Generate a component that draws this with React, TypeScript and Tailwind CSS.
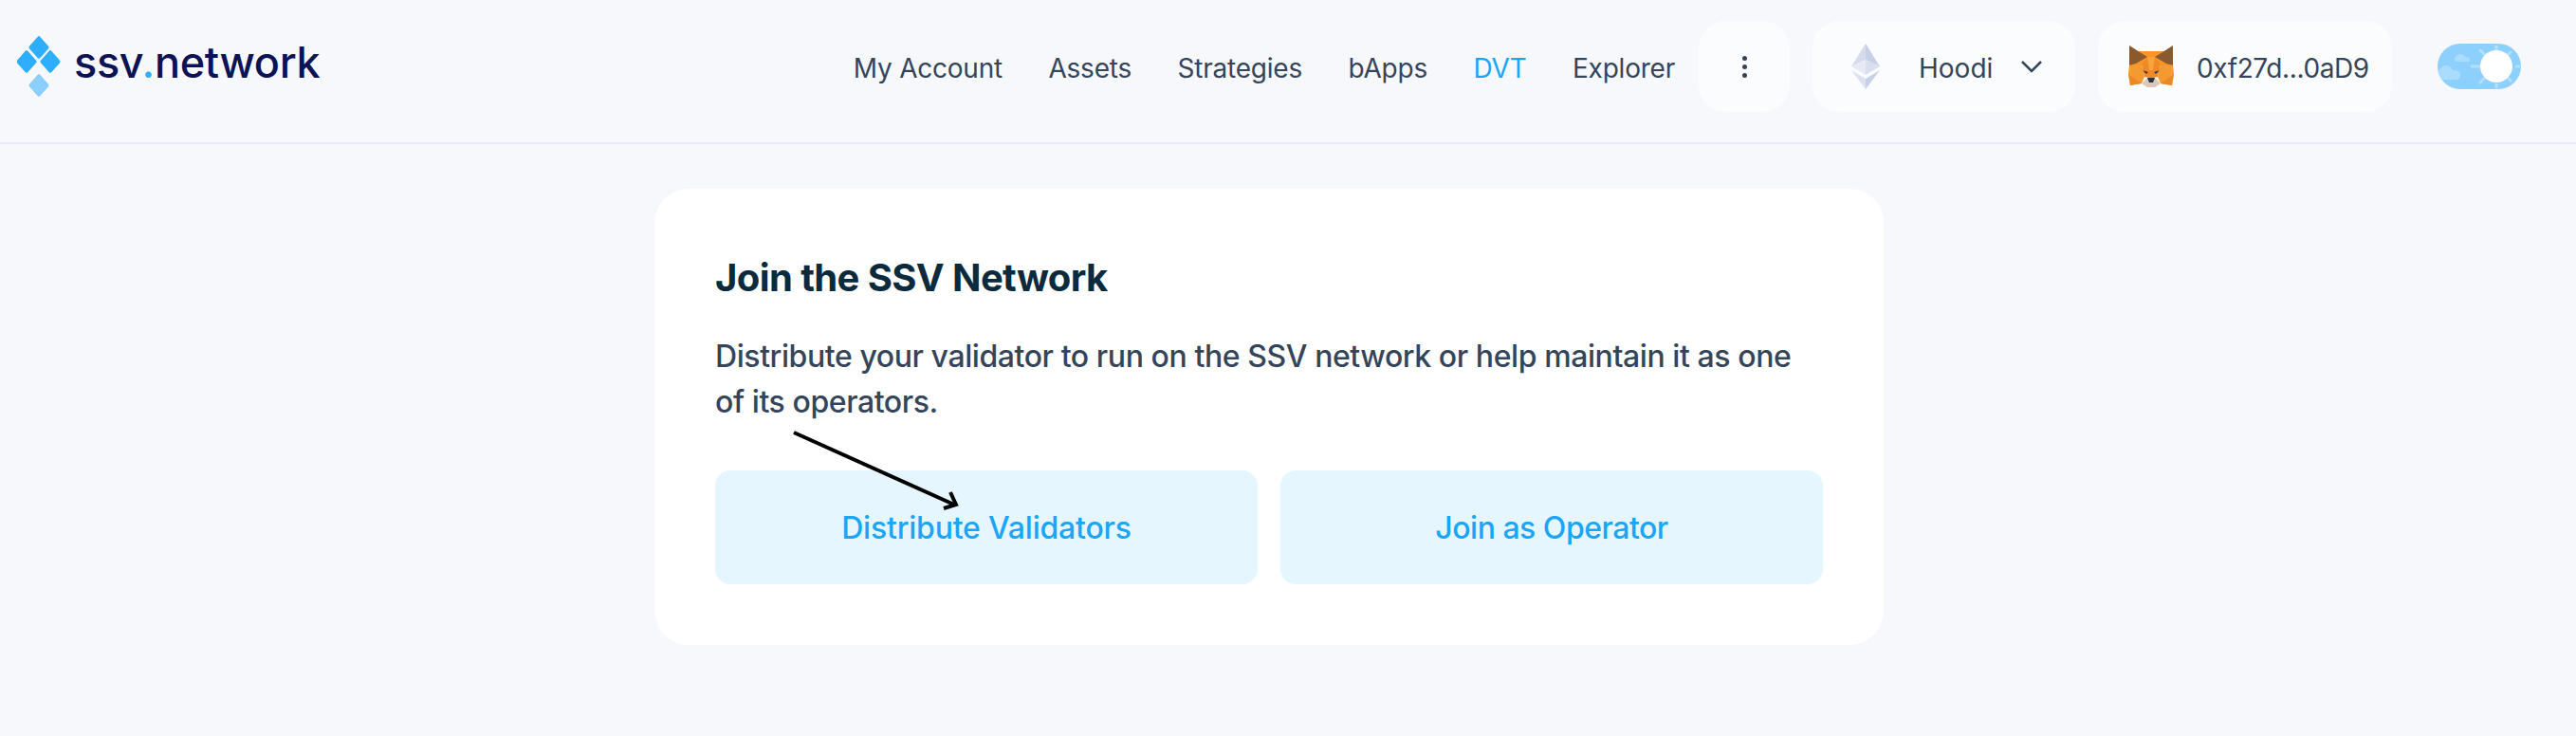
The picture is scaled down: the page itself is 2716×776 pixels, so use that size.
import React from "react";

const navItems = ["My Account", "Assets", "Strategies", "bApps", "DVT", "Explorer"];

const Logo = () => (
  <div className="flex items-center">
    <svg width="50" height="66" viewBox="0 0 50 66" className="shrink-0">
      <g fill="#2eaeff">
        <rect x="-8" y="-8" width="16" height="16" rx="2" transform="translate(23 13) scale(1 1.12) rotate(45)" />
        <rect x="-8" y="-8" width="16" height="16" rx="2" transform="translate(10 28) scale(1 1.12) rotate(45)" />
        <rect x="-8" y="-8" width="16" height="16" rx="2" transform="translate(35 28) scale(1 1.12) rotate(45)" />
      </g>
      <rect x="-8" y="-8" width="16" height="16" rx="2" fill="#8bcfff" transform="translate(23 53) scale(1 1.12) rotate(45)" />
    </svg>
    <span className="mb-[10px] ml-[10px] text-[45px] leading-none font-medium text-[#0b1354] tracking-[-0.3px] font-['Inter',sans-serif]">
      ssv<span className="text-[#2eaeff]">.</span>network
    </span>
  </div>
);

const EthIcon = () => (
  <svg width="30" height="48" viewBox="0 0 30 48">
    <polygon points="15,0 0,24 15,17" fill="#d5dcec" />
    <polygon points="15,0 30,24 15,17" fill="#c7d0e6" />
    <polygon points="15,17 0,24 15,33" fill="#e6eaf4" />
    <polygon points="15,17 30,24 15,33" fill="#d9dfee" />
    <polygon points="0,28 15,48 15,37" fill="#dde2f0" />
    <polygon points="30,28 15,48 15,37" fill="#c7d0e6" />
  </svg>
);

const FoxIcon = () => (
  <svg width="48" height="44" viewBox="0 0 48 44">
    <polygon points="9,6 39,6 47,22 34,21 14,21 1,22" fill="#f7952c" />
    <polygon points="1,0 20,12 8,19 1,21" fill="#8a5a2e" />
    <polygon points="47,0 28,12 40,19 47,21" fill="#8a5a2e" />
    <polygon points="1,21 14,20 17,33 14,40 2,42 0,30" fill="#f59a30" />
    <polygon points="47,21 34,20 31,33 34,40 46,42 48,30" fill="#f59a30" />
    <polygon points="14,20 20,12 28,12 34,20 31,33 26,34 22,34 17,33" fill="#ef8a26" />
    <polygon points="20,12 28,12 26,26 22,26" fill="#f9a33d" />
    <polygon points="0,30 14,40 2,42" fill="#e98a29" />
    <polygon points="48,30 34,40 46,42" fill="#e98a29" />
    <polygon points="14,40 20,34 28,34 34,40 28,44 20,44" fill="#d9c7ba" />
    <polygon points="20,34 28,34 26,39 22,39" fill="#333" />
    <polygon points="15,26 21,28 19,30" fill="#3a3a3a" />
    <polygon points="33,26 27,28 29,30" fill="#3a3a3a" />
  </svg>
);

const ThemeToggle = () => (
  <div className="relative h-12 w-[88px] rounded-full bg-[#8ed0fd] overflow-hidden">
    <svg width="88" height="48" viewBox="0 0 88 48" className="absolute inset-0">
      <g fill="#a9dcfd">
        <path d="M18 17c0-4 3-6 6-6 2 0 4 1 5 3 3 0 5 1 5 3s-1 2-3 2H20c-1 0-2-1-2-2z" />
        <path d="M1 32c0-5 4-9 8-9 3 0 5 2 7 5 4 0 8 1 8 5s-2 5-4 5H6c-2-1-5-3-5-6z" />
      </g>
      <g stroke="#b5e0fd" strokeWidth="3" strokeLinecap="round">
        <line x1="62" y1="3" x2="62" y2="6" />
        <line x1="62" y1="43" x2="62" y2="46" />
        <line x1="36" y1="24" x2="44" y2="24" />
        <line x1="83" y1="24" x2="86" y2="24" />
        <line x1="45" y1="7" x2="50" y2="12" />
        <line x1="45" y1="41" x2="50" y2="36" />
        <line x1="77" y1="9" x2="74" y2="12" />
        <line x1="77" y1="39" x2="74" y2="36" />
      </g>
    </svg>
    <div className="absolute left-[45px] top-[7px] h-[34px] w-[34px] rounded-full bg-white" />
  </div>
);

export default function App() {
  return (
    <div className="min-h-screen bg-[#f7f8fc] font-['Inter',sans-serif]">
      <header className="flex h-[152px] items-center justify-between border-b-2 border-[#e6ebf9] pl-[18px] pr-[58px] pb-[10px]">
        <Logo />
        <div className="flex items-center">
          <nav className="flex items-center gap-[48.5px] pt-[3px] text-[28px] font-normal tracking-[-0.22px] text-[#34455a]">
            {navItems.map((item) => (
              <span key={item} className={item === "DVT" ? "text-[#1ba5f8]" : ""}>
                {item}
              </span>
            ))}
          </nav>
          <button className="ml-[25px] flex h-24 w-24 items-center justify-center rounded-[28px] bg-[#fbfcfe]">
            <span className="flex flex-col gap-[4px]">
              <span className="h-[5px] w-[5px] rounded-full bg-[#34455a]" />
              <span className="h-[5px] w-[5px] rounded-full bg-[#34455a]" />
              <span className="h-[5px] w-[5px] rounded-full bg-[#34455a]" />
            </span>
          </button>
          <button className="ml-6 flex h-24 w-[277px] items-center rounded-[28px] bg-[#fbfcfe] pl-[41px] text-[28px] font-normal text-[#34455a]">
            <EthIcon />
            <span className="ml-[41px] pt-[3px]">Hoodi</span>
            <svg width="22" height="14" viewBox="0 0 22 14" fill="none" stroke="#34455a" strokeWidth="2.5" className="ml-[30px]">
              <path d="M1 2l10 10L21 2" />
            </svg>
          </button>
          <button className="ml-6 flex h-24 w-[310px] items-center rounded-[28px] bg-[#fbfcfe] pl-8 text-[28px] font-normal tracking-[-0.4px] text-[#34455a]">
            <FoxIcon />
            <span className="ml-[24px] pt-[3px]">0xf27d...0aD9</span>
          </button>
          <div className="ml-12">
            <ThemeToggle />
          </div>
        </div>
      </header>
      <main className="flex justify-center pt-[47px] pr-10">
        <div className="relative w-[1296px] rounded-[36px] bg-white p-16">
          <h1 className="text-[40px] leading-[60px] font-bold tracking-[-0.6px] text-[#0b2a3c]">Join the SSV Network</h1>
          <p className="mt-[29px] text-[32px] leading-[48px] font-medium tracking-[-0.42px] text-[#34455a]">
            Distribute your validator to run on the SSV network or help maintain it as one of its operators.
          </p>
          <div className="mt-12 grid grid-cols-2 gap-6">
            <button className="h-[120px] rounded-2xl bg-[#e6f6ff] pt-[2px] text-[32px] font-medium tracking-[-0.2px] text-[#1ba5f8]">Distribute Validators</button>
            <button className="h-[120px] rounded-2xl bg-[#e6f6ff] pt-[2px] text-[32px] font-medium tracking-[-0.5px] text-[#1ba5f8]">Join as Operator</button>
          </div>
          {/* annotation arrow drawn over the card */}
          <svg width="180" height="86" viewBox="0 0 180 86" className="absolute left-[145px] top-[255px]" fill="none" stroke="#000" strokeWidth="4">
            <path d="M2 2L171 78" />
            <path d="M160 82l13-4-6-13" />
          </svg>
        </div>
      </main>
    </div>
  );
}
